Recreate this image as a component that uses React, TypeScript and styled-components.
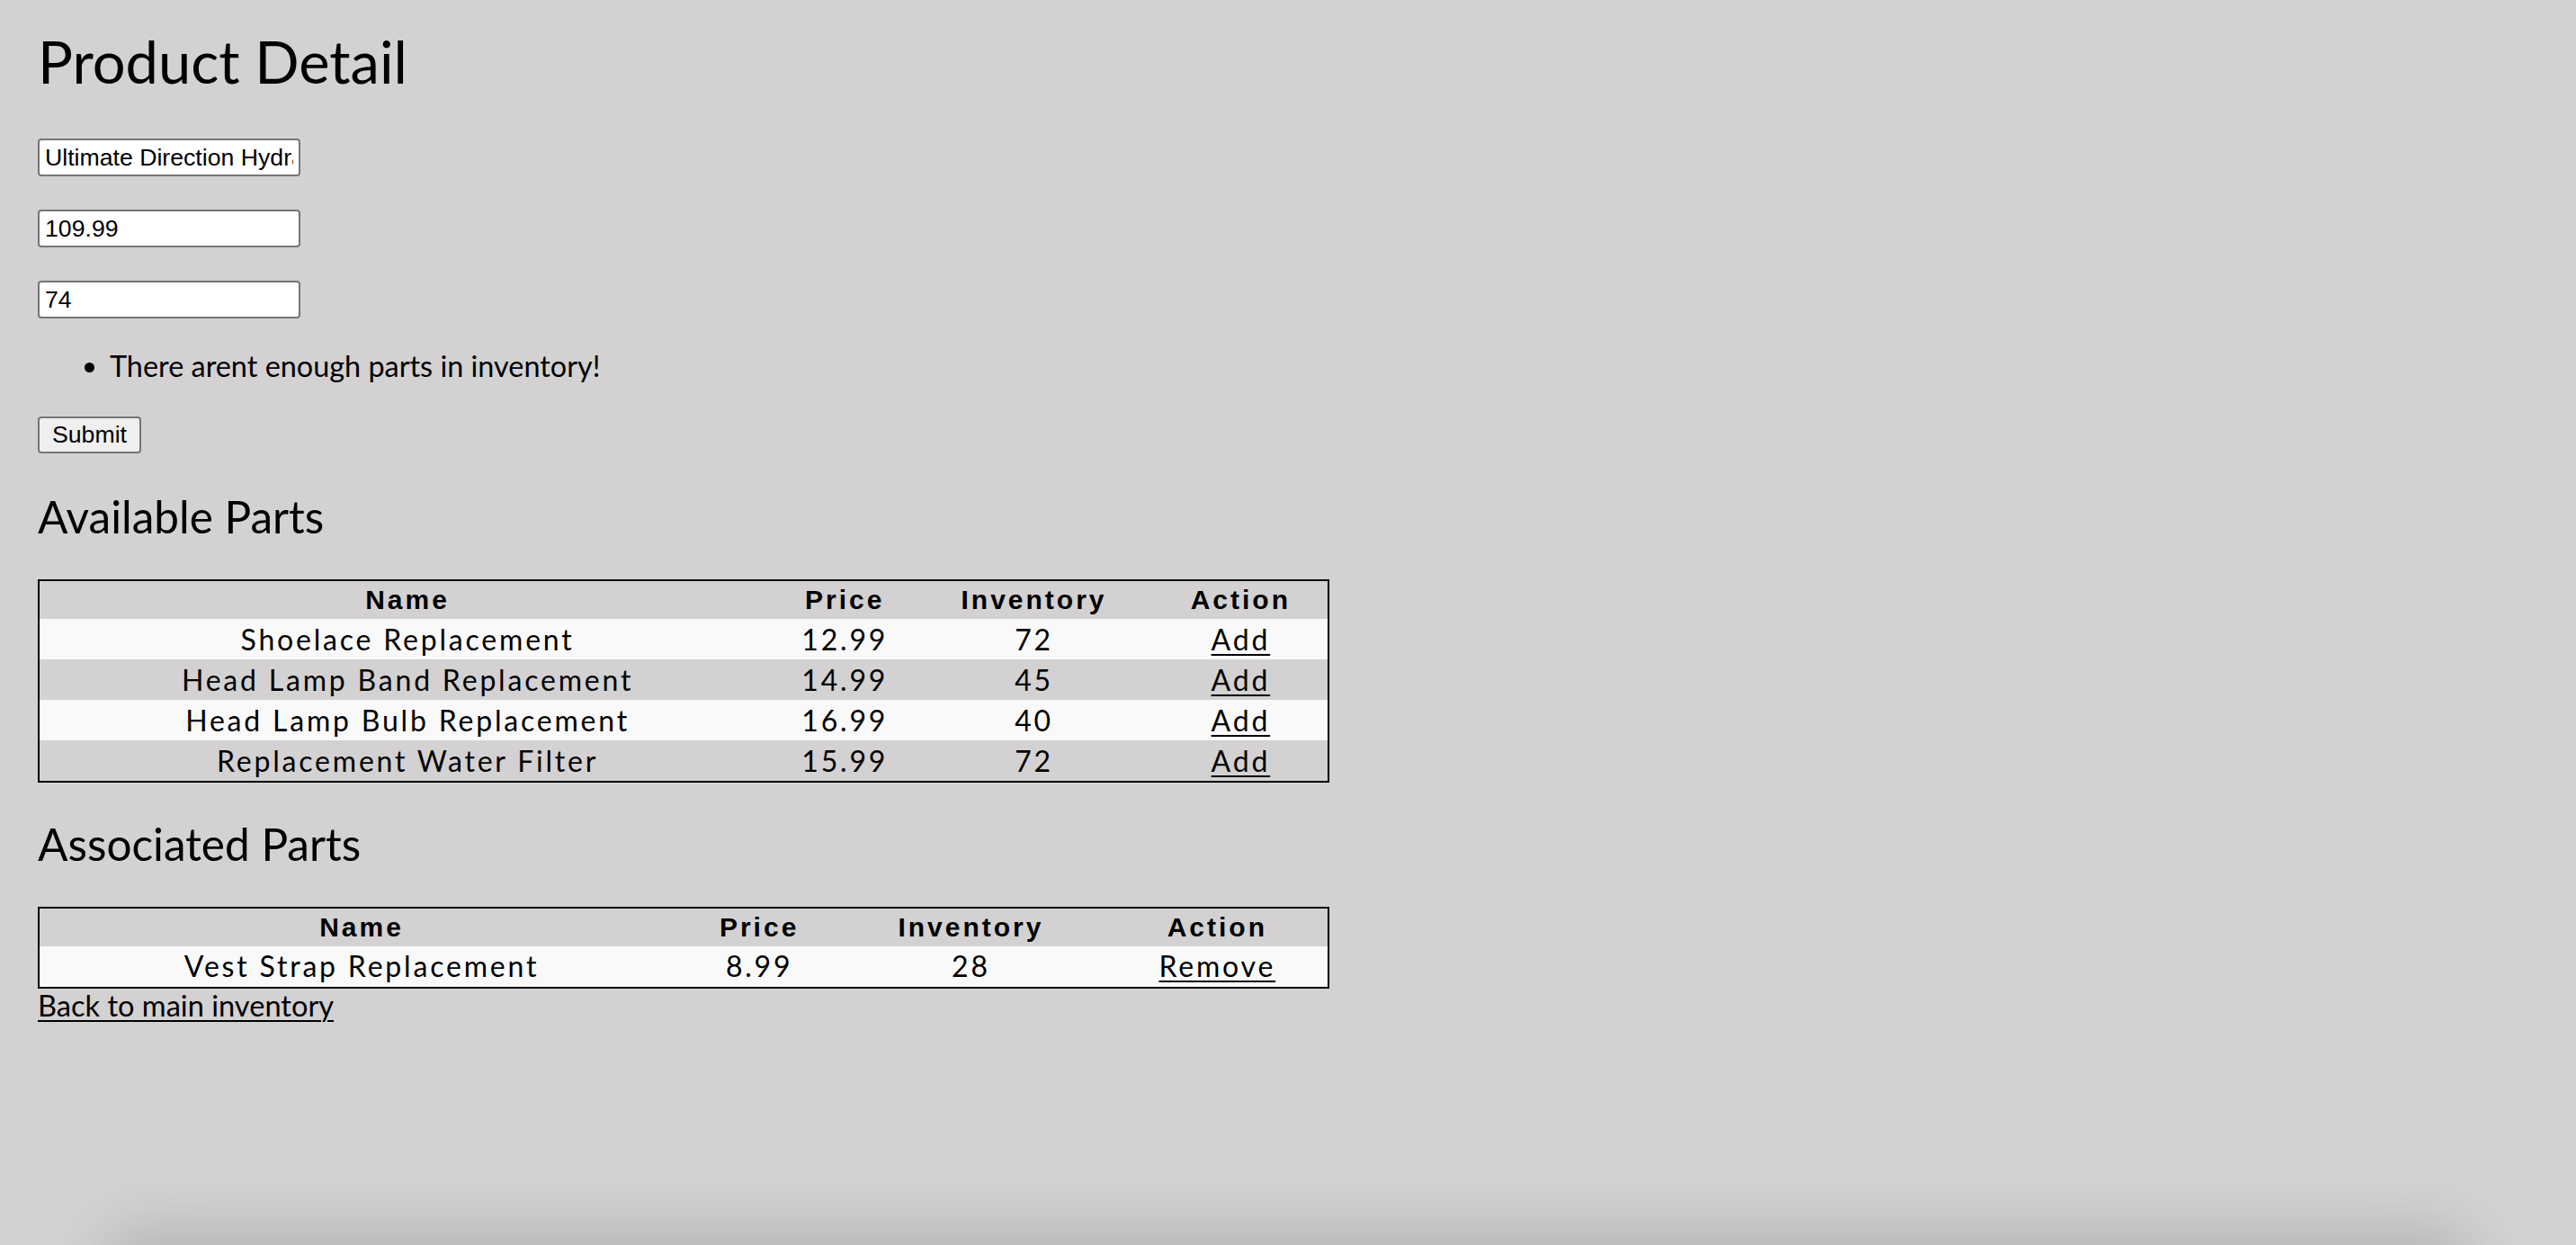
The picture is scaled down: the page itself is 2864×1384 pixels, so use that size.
import React from "react";
import styled, { createGlobalStyle } from "styled-components";

const GlobalStyle = createGlobalStyle`
  html, body {
    margin: 0;
    padding: 0;
    background: #d3d1d2;
  }
  body {
    font-family: Lato, "Liberation Sans", sans-serif;
    color: #000;
  }
`;

const Page = styled.main`
  position: relative;
  box-sizing: border-box;
  min-height: 1384px;
  padding: 28px 42px 0;
  overflow: hidden;

  &::after {
    content: "";
    position: absolute;
    left: 130px;
    right: 130px;
    bottom: -70px;
    height: 70px;
    border-radius: 60px;
    box-shadow: 0 0 60px 24px rgba(0, 0, 0, 0.12);
  }
`;

const Title = styled.h1`
  margin: 0 0 46px;
  font: 400 65px/80px Lato, sans-serif;
`;

const Form = styled.form`
  display: flex;
  flex-direction: column;
  align-items: flex-start;
`;

const Fields = styled.div`
  display: flex;
  flex-direction: column;
  gap: 37px;
`;

const Field = styled.input`
  box-sizing: border-box;
  width: 292px;
  height: 42px;
  margin: 0;
  padding: 2px 6px;
  border: 2px solid #767676;
  border-radius: 4px;
  background: #fff;
  color: #000;
  font: 400 26.67px "Liberation Sans", Arial, sans-serif;
`;

const ErrorList = styled.ul`
  margin: 34px 0 37px;
  padding-left: 80px;
  font: 400 32.4px/38.4px Lato, sans-serif;
`;

const SubmitButton = styled.button`
  box-sizing: border-box;
  height: 41px;
  padding: 2px 14px;
  border: 2px solid #767676;
  border-radius: 4px;
  background: #efefef;
  color: #000;
  font: 400 26.67px "Liberation Sans", Arial, sans-serif;
`;

const SectionTitle = styled.h2<{ $top: number; $bottom: number }>`
  margin: ${(p) => p.$top}px 0 ${(p) => p.$bottom}px;
  font: 400 49.5px/57.6px Lato, sans-serif;
`;

const Table = styled.table`
  width: 1436px;
  border: 2px solid #000;
  border-collapse: collapse;
  table-layout: fixed;
`;

const HeadCell = styled.th`
  height: 42px;
  padding: 0;
  text-align: center;
  font: 700 30px/36px "Liberation Sans", Arial, sans-serif;
  letter-spacing: 3px;
`;

const Row = styled.tr<{ $odd: boolean }>`
  background: ${(p) => (p.$odd ? "#f9f9f9" : "transparent")};
`;

const Cell = styled.td`
  height: 45px;
  padding: 0;
  text-align: center;
  font: 400 32px/38px Lato, sans-serif;
  letter-spacing: 2.8px;
`;

const ActionLink = styled.a`
  color: #000;
  text-decoration: underline;
  text-underline-offset: 4px;
  text-decoration-thickness: 2px;
`;

const BackLink = styled.a`
  display: inline-block;
  color: #000;
  font: 400 32.6px/38.4px Lato, sans-serif;
  text-decoration: underline;
  text-underline-offset: 4px;
  text-decoration-thickness: 2px;
`;

type Part = { name: string; price: string; inv: number };

const available: Part[] = [
  { name: "Shoelace Replacement", price: "12.99", inv: 72 },
  { name: "Head Lamp Band Replacement", price: "14.99", inv: 45 },
  { name: "Head Lamp Bulb Replacement", price: "16.99", inv: 40 },
  { name: "Replacement Water Filter", price: "15.99", inv: 72 },
];

const associated: Part[] = [
  { name: "Vest Strap Replacement", price: "8.99", inv: 28 },
];

function PartsTable({
  parts,
  widths,
  action,
}: {
  parts: Part[];
  widths: number[];
  action: string;
}) {
  return (
    <Table>
      <colgroup>
        {widths.map((w, i) => (
          <col key={i} style={{ width: w }} />
        ))}
      </colgroup>
      <thead>
        <tr>
          <HeadCell>Name</HeadCell>
          <HeadCell>Price</HeadCell>
          <HeadCell>Inventory</HeadCell>
          <HeadCell>Action</HeadCell>
        </tr>
      </thead>
      <tbody>
        {parts.map((p, i) => (
          <Row key={p.name} $odd={i % 2 === 0}>
            <Cell>{p.name}</Cell>
            <Cell>{p.price}</Cell>
            <Cell>{p.inv}</Cell>
            <Cell>
              <ActionLink href="#">{action}</ActionLink>
            </Cell>
          </Row>
        ))}
      </tbody>
    </Table>
  );
}

export default function App() {
  return (
    <>
      <GlobalStyle />
      <Page>
        <Title>Product Detail</Title>
        <Form onSubmit={(e) => e.preventDefault()}>
          <Fields>
            <Field type="text" defaultValue="Ultimate Direction Hydration Vest" />
            <Field type="text" defaultValue="109.99" />
            <Field type="text" defaultValue="74" />
          </Fields>
          <ErrorList>
            <li>There arent enough parts in inventory!</li>
          </ErrorList>
          <SubmitButton type="submit">Submit</SubmitButton>
        </Form>
        <SectionTitle $top={42} $bottom={40}>Available Parts</SectionTitle>
        <PartsTable parts={available} widths={[818, 154, 266, 194]} action="Add" />
        <SectionTitle $top={40} $bottom={40}>Associated Parts</SectionTitle>
        <PartsTable parts={associated} widths={[716, 168, 302, 246]} action="Remove" />
        <BackLink href="#">Back to main inventory</BackLink>
      </Page>
    </>
  );
}
